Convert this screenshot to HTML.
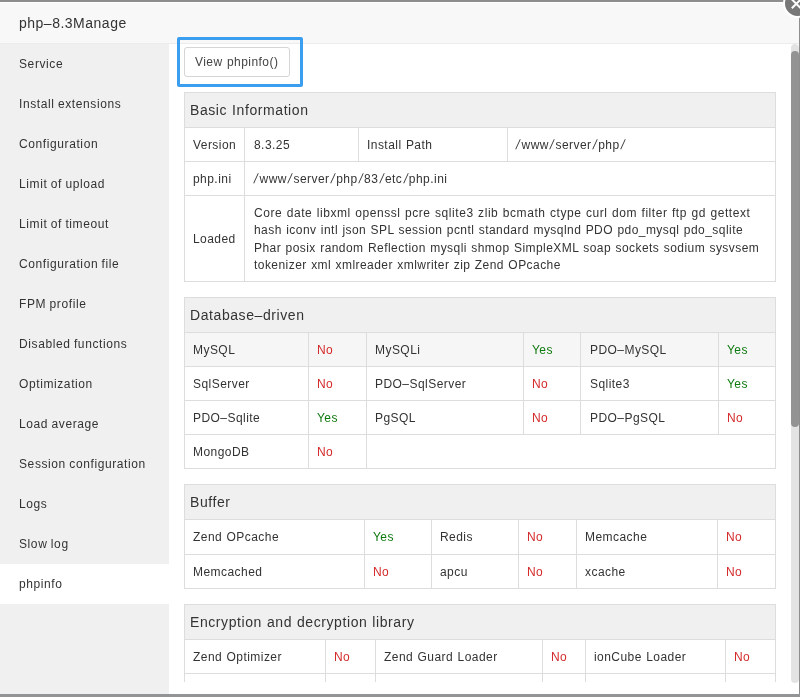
<!DOCTYPE html><html><head><meta charset="utf-8"><style>
html,body{margin:0;padding:0;width:800px;height:697px;overflow:hidden;background:#8d8e8d;}
body{position:relative;font-family:"Liberation Sans",sans-serif;}
.t{position:absolute;white-space:nowrap;line-height:normal;will-change:transform;}
.r{position:absolute;}
.sl{display:inline-block;margin:0 1.4px;transform:scaleY(1.12) skewX(-14deg);transform-origin:50% 55%;}
</style></head><body>
<div class="r" style="left:0px;top:694px;width:800px;height:3px;background:#939495"></div>
<div class="r" style="left:0px;top:2px;width:799px;height:692px;background:#ffffff"></div>
<div class="r" style="left:0px;top:3px;width:799px;height:40px;background:#f8f8f8"></div>
<div class="r" style="left:0px;top:43px;width:799px;height:1px;background:#ececec"></div>
<div class="t" style="left:18.8px;top:15.18px;font-size:14px;color:#333;letter-spacing:0.5px;word-spacing:0;">php–8.3Manage</div>
<div class="r" style="left:0px;top:44px;width:169px;height:650px;background:#f0f0f0"></div>
<div class="t" style="left:19.3px;top:57.14px;font-size:12px;color:#333;letter-spacing:0.6px;word-spacing:-0.5px;">Service</div>
<div class="t" style="left:19.3px;top:97.14px;font-size:12px;color:#333;letter-spacing:0.6px;word-spacing:-0.5px;">Install extensions</div>
<div class="t" style="left:19.3px;top:137.14px;font-size:12px;color:#333;letter-spacing:0.6px;word-spacing:-0.5px;">Configuration</div>
<div class="t" style="left:19.3px;top:177.14px;font-size:12px;color:#333;letter-spacing:0.6px;word-spacing:-0.5px;">Limit of upload</div>
<div class="t" style="left:19.3px;top:217.14px;font-size:12px;color:#333;letter-spacing:0.6px;word-spacing:-0.5px;">Limit of timeout</div>
<div class="t" style="left:19.3px;top:257.14px;font-size:12px;color:#333;letter-spacing:0.6px;word-spacing:-0.5px;">Configuration file</div>
<div class="t" style="left:19.3px;top:297.14px;font-size:12px;color:#333;letter-spacing:0.6px;word-spacing:-0.5px;">FPM profile</div>
<div class="t" style="left:19.3px;top:337.14px;font-size:12px;color:#333;letter-spacing:0.6px;word-spacing:-0.5px;">Disabled functions</div>
<div class="t" style="left:19.3px;top:377.14px;font-size:12px;color:#333;letter-spacing:0.6px;word-spacing:-0.5px;">Optimization</div>
<div class="t" style="left:19.3px;top:417.14px;font-size:12px;color:#333;letter-spacing:0.6px;word-spacing:-0.5px;">Load average</div>
<div class="t" style="left:19.3px;top:457.14px;font-size:12px;color:#333;letter-spacing:0.6px;word-spacing:-0.5px;">Session configuration</div>
<div class="t" style="left:19.3px;top:497.14px;font-size:12px;color:#333;letter-spacing:0.6px;word-spacing:-0.5px;">Logs</div>
<div class="t" style="left:19.3px;top:537.14px;font-size:12px;color:#333;letter-spacing:0.6px;word-spacing:-0.5px;">Slow log</div>
<div class="r" style="left:0px;top:564px;width:169px;height:40px;background:#ffffff"></div>
<div class="t" style="left:19.3px;top:577.14px;font-size:12px;color:#333;letter-spacing:0.6px;word-spacing:-0.5px;">phpinfo</div>
<div class="r" style="left:169px;top:44px;width:622px;height:650px;background:#ffffff"></div>
<div class="r" style="left:184px;top:47px;width:104px;height:28px;border:1px solid #d5d5d5;border-radius:3px;background:#fff"></div>
<div class="t" style="left:195px;top:55.14px;font-size:12px;color:#444;letter-spacing:0.45px;word-spacing:0.6px;">View phpinfo()</div>
<div class="r" style="left:177px;top:37px;width:120px;height:44px;border:3px solid #3c9eef;border-radius:2px"></div>
<div class="r" style="left:184px;top:92px;width:592px;height:35px;background:#f0f0f0"></div>
<div class="r" style="left:184px;top:92px;width:592px;height:1px;background:#ddd"></div>
<div class="r" style="left:184px;top:127px;width:592px;height:1px;background:#ddd"></div>
<div class="r" style="left:184px;top:161px;width:592px;height:1px;background:#ddd"></div>
<div class="r" style="left:184px;top:195px;width:592px;height:1px;background:#ddd"></div>
<div class="r" style="left:184px;top:281px;width:592px;height:1px;background:#ddd"></div>
<div class="r" style="left:184px;top:92px;width:1px;height:190px;background:#ddd"></div>
<div class="r" style="left:775px;top:92px;width:1px;height:190px;background:#ddd"></div>
<div class="r" style="left:244px;top:127px;width:1px;height:35px;background:#ddd"></div>
<div class="r" style="left:358px;top:127px;width:1px;height:35px;background:#ddd"></div>
<div class="r" style="left:507px;top:127px;width:1px;height:35px;background:#ddd"></div>
<div class="r" style="left:244px;top:161px;width:1px;height:35px;background:#ddd"></div>
<div class="r" style="left:244px;top:195px;width:1px;height:87px;background:#ddd"></div>
<div class="t" style="left:189.6px;top:102.13px;font-size:14px;color:#333;letter-spacing:0.58px;word-spacing:0.5px;">Basic Information</div>
<div class="t" style="left:193px;top:137.64px;font-size:12px;color:#333;letter-spacing:0.45px;word-spacing:0.6px;">Version</div>
<div class="t" style="left:254px;top:137.64px;font-size:12px;color:#333;letter-spacing:0.45px;word-spacing:0.6px;">8.3.25</div>
<div class="t" style="left:367px;top:137.64px;font-size:12px;color:#333;letter-spacing:0.45px;word-spacing:0.6px;">Install Path</div>
<div class="t" style="left:514.6px;top:137.64px;font-size:12px;color:#333;letter-spacing:0.45px;word-spacing:0.6px;"><span class="sl">/</span>www<span class="sl">/</span>server<span class="sl">/</span>php<span class="sl">/</span></div>
<div class="t" style="left:193px;top:171.64px;font-size:12px;color:#333;letter-spacing:0.45px;word-spacing:0.6px;">php.ini</div>
<div class="t" style="left:252.6px;top:171.64px;font-size:12px;color:#333;letter-spacing:0.45px;word-spacing:0.6px;"><span class="sl">/</span>www<span class="sl">/</span>server<span class="sl">/</span>php<span class="sl">/</span>83<span class="sl">/</span>etc<span class="sl">/</span>php.ini</div>
<div class="t" style="left:193px;top:231.64px;font-size:12px;color:#333;letter-spacing:0.45px;word-spacing:0.6px;">Loaded</div>
<div class="t" style="left:253.7px;top:205.74px;font-size:12px;color:#333;letter-spacing:0.555px;word-spacing:0.6px;">Core date libxml openssl pcre sqlite3 zlib bcmath ctype curl dom filter ftp gd gettext</div>
<div class="t" style="left:253.7px;top:223.19px;font-size:12px;color:#333;letter-spacing:0.45px;word-spacing:0.6px;">hash iconv intl json SPL session pcntl standard mysqlnd PDO pdo_mysql pdo_sqlite</div>
<div class="t" style="left:253.7px;top:240.64px;font-size:12px;color:#333;letter-spacing:0.45px;word-spacing:0.6px;">Phar posix random Reflection mysqli shmop SimpleXML soap sockets sodium sysvsem</div>
<div class="t" style="left:253.7px;top:258.09px;font-size:12px;color:#333;letter-spacing:0.45px;word-spacing:0.6px;">tokenizer xml xmlreader xmlwriter zip Zend OPcache</div>
<div class="r" style="left:184px;top:297px;width:592px;height:35px;background:#f0f0f0"></div>
<div class="r" style="left:184px;top:332px;width:592px;height:34px;background:#f6f6f6"></div>
<div class="r" style="left:184px;top:297px;width:592px;height:1px;background:#ddd"></div>
<div class="r" style="left:184px;top:332px;width:592px;height:1px;background:#ddd"></div>
<div class="r" style="left:184px;top:366px;width:592px;height:1px;background:#ddd"></div>
<div class="r" style="left:184px;top:400px;width:592px;height:1px;background:#ddd"></div>
<div class="r" style="left:184px;top:434px;width:592px;height:1px;background:#ddd"></div>
<div class="r" style="left:184px;top:468px;width:592px;height:1px;background:#ddd"></div>
<div class="r" style="left:184px;top:297px;width:1px;height:172px;background:#ddd"></div>
<div class="r" style="left:775px;top:297px;width:1px;height:172px;background:#ddd"></div>
<div class="r" style="left:308px;top:332px;width:1px;height:35px;background:#ddd"></div>
<div class="r" style="left:366px;top:332px;width:1px;height:35px;background:#ddd"></div>
<div class="r" style="left:523px;top:332px;width:1px;height:35px;background:#ddd"></div>
<div class="r" style="left:580px;top:332px;width:1px;height:35px;background:#ddd"></div>
<div class="r" style="left:718px;top:332px;width:1px;height:35px;background:#ddd"></div>
<div class="r" style="left:308px;top:366px;width:1px;height:35px;background:#ddd"></div>
<div class="r" style="left:366px;top:366px;width:1px;height:35px;background:#ddd"></div>
<div class="r" style="left:523px;top:366px;width:1px;height:35px;background:#ddd"></div>
<div class="r" style="left:580px;top:366px;width:1px;height:35px;background:#ddd"></div>
<div class="r" style="left:718px;top:366px;width:1px;height:35px;background:#ddd"></div>
<div class="r" style="left:308px;top:400px;width:1px;height:35px;background:#ddd"></div>
<div class="r" style="left:366px;top:400px;width:1px;height:35px;background:#ddd"></div>
<div class="r" style="left:523px;top:400px;width:1px;height:35px;background:#ddd"></div>
<div class="r" style="left:580px;top:400px;width:1px;height:35px;background:#ddd"></div>
<div class="r" style="left:718px;top:400px;width:1px;height:35px;background:#ddd"></div>
<div class="r" style="left:308px;top:434px;width:1px;height:35px;background:#ddd"></div>
<div class="r" style="left:366px;top:434px;width:1px;height:35px;background:#ddd"></div>
<div class="t" style="left:189.6px;top:307.13px;font-size:14px;color:#333;letter-spacing:0.58px;word-spacing:0.5px;">Database–driven</div>
<div class="t" style="left:193px;top:342.64px;font-size:12px;color:#333;letter-spacing:0.45px;word-spacing:0.6px;">MySQL</div>
<div class="t" style="left:317px;top:342.64px;font-size:12px;color:#d42a2a;letter-spacing:0.45px;word-spacing:0.6px;">No</div>
<div class="t" style="left:375px;top:342.64px;font-size:12px;color:#333;letter-spacing:0.45px;word-spacing:0.6px;">MySQLi</div>
<div class="t" style="left:532px;top:342.64px;font-size:12px;color:#0f7a0f;letter-spacing:0.45px;word-spacing:0.6px;">Yes</div>
<div class="t" style="left:590px;top:342.64px;font-size:12px;color:#333;letter-spacing:0.45px;word-spacing:0.6px;">PDO–MySQL</div>
<div class="t" style="left:727px;top:342.64px;font-size:12px;color:#0f7a0f;letter-spacing:0.45px;word-spacing:0.6px;">Yes</div>
<div class="t" style="left:193px;top:376.64px;font-size:12px;color:#333;letter-spacing:0.45px;word-spacing:0.6px;">SqlServer</div>
<div class="t" style="left:317px;top:376.64px;font-size:12px;color:#d42a2a;letter-spacing:0.45px;word-spacing:0.6px;">No</div>
<div class="t" style="left:375px;top:376.64px;font-size:12px;color:#333;letter-spacing:0.45px;word-spacing:0.6px;">PDO–SqlServer</div>
<div class="t" style="left:532px;top:376.64px;font-size:12px;color:#d42a2a;letter-spacing:0.45px;word-spacing:0.6px;">No</div>
<div class="t" style="left:590px;top:376.64px;font-size:12px;color:#333;letter-spacing:0.45px;word-spacing:0.6px;">Sqlite3</div>
<div class="t" style="left:727px;top:376.64px;font-size:12px;color:#0f7a0f;letter-spacing:0.45px;word-spacing:0.6px;">Yes</div>
<div class="t" style="left:193px;top:410.64px;font-size:12px;color:#333;letter-spacing:0.45px;word-spacing:0.6px;">PDO–Sqlite</div>
<div class="t" style="left:317px;top:410.64px;font-size:12px;color:#0f7a0f;letter-spacing:0.45px;word-spacing:0.6px;">Yes</div>
<div class="t" style="left:375px;top:410.64px;font-size:12px;color:#333;letter-spacing:0.45px;word-spacing:0.6px;">PgSQL</div>
<div class="t" style="left:532px;top:410.64px;font-size:12px;color:#d42a2a;letter-spacing:0.45px;word-spacing:0.6px;">No</div>
<div class="t" style="left:590px;top:410.64px;font-size:12px;color:#333;letter-spacing:0.45px;word-spacing:0.6px;">PDO–PgSQL</div>
<div class="t" style="left:727px;top:410.64px;font-size:12px;color:#d42a2a;letter-spacing:0.45px;word-spacing:0.6px;">No</div>
<div class="t" style="left:193px;top:444.64px;font-size:12px;color:#333;letter-spacing:0.45px;word-spacing:0.6px;">MongoDB</div>
<div class="t" style="left:317px;top:444.64px;font-size:12px;color:#d42a2a;letter-spacing:0.45px;word-spacing:0.6px;">No</div>
<div class="r" style="left:184px;top:484px;width:592px;height:35px;background:#f0f0f0"></div>
<div class="r" style="left:184px;top:484px;width:592px;height:1px;background:#ddd"></div>
<div class="r" style="left:184px;top:519px;width:592px;height:1px;background:#ddd"></div>
<div class="r" style="left:184px;top:554px;width:592px;height:1px;background:#ddd"></div>
<div class="r" style="left:184px;top:588px;width:592px;height:1px;background:#ddd"></div>
<div class="r" style="left:184px;top:484px;width:1px;height:105px;background:#ddd"></div>
<div class="r" style="left:775px;top:484px;width:1px;height:105px;background:#ddd"></div>
<div class="r" style="left:364px;top:519px;width:1px;height:36px;background:#ddd"></div>
<div class="r" style="left:431px;top:519px;width:1px;height:36px;background:#ddd"></div>
<div class="r" style="left:518px;top:519px;width:1px;height:36px;background:#ddd"></div>
<div class="r" style="left:576px;top:519px;width:1px;height:36px;background:#ddd"></div>
<div class="r" style="left:717px;top:519px;width:1px;height:36px;background:#ddd"></div>
<div class="r" style="left:364px;top:554px;width:1px;height:35px;background:#ddd"></div>
<div class="r" style="left:431px;top:554px;width:1px;height:35px;background:#ddd"></div>
<div class="r" style="left:518px;top:554px;width:1px;height:35px;background:#ddd"></div>
<div class="r" style="left:576px;top:554px;width:1px;height:35px;background:#ddd"></div>
<div class="r" style="left:717px;top:554px;width:1px;height:35px;background:#ddd"></div>
<div class="t" style="left:189.6px;top:494.13px;font-size:14px;color:#333;letter-spacing:0.58px;word-spacing:0.5px;">Buffer</div>
<div class="t" style="left:193px;top:530.14px;font-size:12px;color:#333;letter-spacing:0.45px;word-spacing:0.6px;">Zend OPcache</div>
<div class="t" style="left:373px;top:530.14px;font-size:12px;color:#0f7a0f;letter-spacing:0.45px;word-spacing:0.6px;">Yes</div>
<div class="t" style="left:440px;top:530.14px;font-size:12px;color:#333;letter-spacing:0.45px;word-spacing:0.6px;">Redis</div>
<div class="t" style="left:527px;top:530.14px;font-size:12px;color:#d42a2a;letter-spacing:0.45px;word-spacing:0.6px;">No</div>
<div class="t" style="left:585px;top:530.14px;font-size:12px;color:#333;letter-spacing:0.45px;word-spacing:0.6px;">Memcache</div>
<div class="t" style="left:726px;top:530.14px;font-size:12px;color:#d42a2a;letter-spacing:0.45px;word-spacing:0.6px;">No</div>
<div class="t" style="left:193px;top:564.64px;font-size:12px;color:#333;letter-spacing:0.45px;word-spacing:0.6px;">Memcached</div>
<div class="t" style="left:373px;top:564.64px;font-size:12px;color:#d42a2a;letter-spacing:0.45px;word-spacing:0.6px;">No</div>
<div class="t" style="left:440px;top:564.64px;font-size:12px;color:#333;letter-spacing:0.45px;word-spacing:0.6px;">apcu</div>
<div class="t" style="left:527px;top:564.64px;font-size:12px;color:#d42a2a;letter-spacing:0.45px;word-spacing:0.6px;">No</div>
<div class="t" style="left:585px;top:564.64px;font-size:12px;color:#333;letter-spacing:0.45px;word-spacing:0.6px;">xcache</div>
<div class="t" style="left:726px;top:564.64px;font-size:12px;color:#d42a2a;letter-spacing:0.45px;word-spacing:0.6px;">No</div>
<div class="r" style="left:0;top:0;width:800px;height:682px;overflow:hidden">
<div class="r" style="left:184px;top:604px;width:592px;height:35px;background:#f0f0f0"></div>
<div class="r" style="left:184px;top:604px;width:592px;height:1px;background:#ddd"></div>
<div class="r" style="left:184px;top:639px;width:592px;height:1px;background:#ddd"></div>
<div class="r" style="left:184px;top:673px;width:592px;height:1px;background:#ddd"></div>
<div class="r" style="left:184px;top:708px;width:592px;height:1px;background:#ddd"></div>
<div class="r" style="left:184px;top:604px;width:1px;height:105px;background:#ddd"></div>
<div class="r" style="left:775px;top:604px;width:1px;height:105px;background:#ddd"></div>
<div class="r" style="left:325px;top:639px;width:1px;height:35px;background:#ddd"></div>
<div class="r" style="left:375px;top:639px;width:1px;height:35px;background:#ddd"></div>
<div class="r" style="left:542px;top:639px;width:1px;height:35px;background:#ddd"></div>
<div class="r" style="left:585px;top:639px;width:1px;height:35px;background:#ddd"></div>
<div class="r" style="left:725px;top:639px;width:1px;height:35px;background:#ddd"></div>
<div class="r" style="left:325px;top:673px;width:1px;height:36px;background:#ddd"></div>
<div class="r" style="left:375px;top:673px;width:1px;height:36px;background:#ddd"></div>
<div class="r" style="left:542px;top:673px;width:1px;height:36px;background:#ddd"></div>
<div class="r" style="left:585px;top:673px;width:1px;height:36px;background:#ddd"></div>
<div class="r" style="left:725px;top:673px;width:1px;height:36px;background:#ddd"></div>
<div class="t" style="left:189.6px;top:614.13px;font-size:14px;color:#333;letter-spacing:0.58px;word-spacing:0.5px;">Encryption and decryption library</div>
<div class="t" style="left:193px;top:649.64px;font-size:12px;color:#333;letter-spacing:0.45px;word-spacing:0.6px;">Zend Optimizer</div>
<div class="t" style="left:334px;top:649.64px;font-size:12px;color:#d42a2a;letter-spacing:0.45px;word-spacing:0.6px;">No</div>
<div class="t" style="left:384px;top:649.64px;font-size:12px;color:#333;letter-spacing:0.45px;word-spacing:0.6px;">Zend Guard Loader</div>
<div class="t" style="left:551px;top:649.64px;font-size:12px;color:#d42a2a;letter-spacing:0.45px;word-spacing:0.6px;">No</div>
<div class="t" style="left:594px;top:649.64px;font-size:12px;color:#333;letter-spacing:0.45px;word-spacing:0.6px;">ionCube Loader</div>
<div class="t" style="left:734px;top:649.64px;font-size:12px;color:#d42a2a;letter-spacing:0.45px;word-spacing:0.6px;">No</div>
</div>
<div class="r" style="left:791px;top:44px;width:8px;height:639px;background:#e3e3e3;border-radius:4px"></div>
<div class="r" style="left:791px;top:51px;width:8px;height:376px;background:#939393;border-radius:4px"></div>
<div class="r" style="left:783.3px;top:-11.5px;width:25px;height:25px;border-radius:50%;background:#787878;border:2px solid #fff"></div>
<svg class="r" style="left:780px;top:-15px" width="34" height="34" viewBox="0 0 34 34"><path d="M11.8 23.3 L20.8 14.3 M11.8 14.3 L20.8 23.3" stroke="#fff" stroke-width="2" stroke-linecap="butt"/></svg>
</body></html>
